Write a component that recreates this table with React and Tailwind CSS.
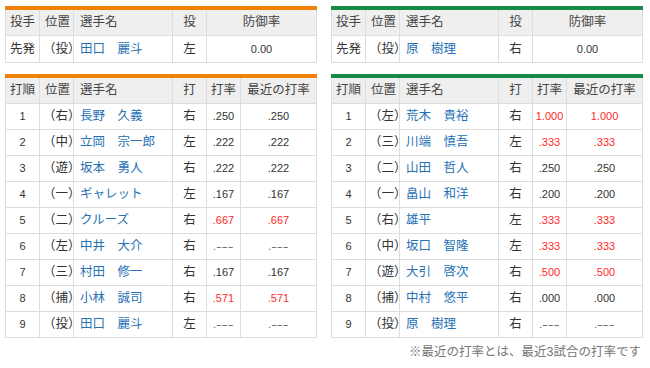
import React from "react";

const giants = {
  bar: "bg-[#f0820a]",
  pitcher: { pos: "（投）", name: "田口　麗斗", hand: "左", era: "0.00" },
  lineup: [
    ["1", "（右）", "長野　久義", "右", ".250", ".250", false],
    ["2", "（中）", "立岡　宗一郎", "左", ".222", ".222", false],
    ["3", "（遊）", "坂本　勇人", "右", ".222", ".222", false],
    ["4", "（一）", "ギャレット", "左", ".167", ".167", false],
    ["5", "（二）", "クルーズ", "右", ".667", ".667", true],
    ["6", "（左）", "中井　大介", "右", ".---", ".---", false],
    ["7", "（三）", "村田　修一", "右", ".167", ".167", false],
    ["8", "（捕）", "小林　誠司", "右", ".571", ".571", true],
    ["9", "（投）", "田口　麗斗", "左", ".---", ".---", false],
  ],
};

const swallows = {
  bar: "bg-[#178a48]",
  pitcher: { pos: "（投）", name: "原　樹理", hand: "右", era: "0.00" },
  lineup: [
    ["1", "（左）", "荒木　貴裕", "右", "1.000", "1.000", true],
    ["2", "（三）", "川端　慎吾", "左", ".333", ".333", true],
    ["3", "（二）", "山田　哲人", "右", ".250", ".250", false],
    ["4", "（一）", "畠山　和洋", "右", ".200", ".200", false],
    ["5", "（右）", "雄平", "左", ".333", ".333", true],
    ["6", "（中）", "坂口　智隆", "左", ".333", ".333", true],
    ["7", "（遊）", "大引　啓次", "右", ".500", ".500", true],
    ["8", "（捕）", "中村　悠平", "右", ".000", ".000", false],
    ["9", "（投）", "原　樹理", "右", ".---", ".---", false],
  ],
};

const th = "h-[26px] border-r border-b border-[#dddddd] bg-[#efefef] font-normal text-[#444] p-0";
const td = "h-[26px] border-r border-b border-[#dddddd] bg-white p-0";

// ".---" is drawn with longer dashes in the original
const Avg = ({ v }) =>
  v === ".---" ? (
    <span className="text-[#666]">
      .
      <span className="inline-block w-[18px] text-left">
        <span className="inline-block origin-left scale-x-[1.6]">---</span>
      </span>
    </span>
  ) : (
    v
  );

const Cols = ({ top }) => (
  <colgroup>
    <col className="w-[35px]" />
    <col className="w-[34px]" />
    <col className="w-[99px]" />
    <col className="w-[34px]" />
    {top ? (
      <col className="w-[110px]" />
    ) : (
      <>
        <col className="w-[34px]" />
        <col className="w-[76px]" />
      </>
    )}
  </colgroup>
);

const PitcherTable = ({ team }) => (
  <div className="w-[312px]">
    <div className={`h-[4px] ${team.bar}`} />
    <table className="w-[312px] table-fixed border-separate border-spacing-0">
      <Cols top />
      <thead>
        <tr>
          <th className={`${th} border-l text-center`}>投手</th>
          <th className={`${th} text-left pl-[5px]`}>位置</th>
          <th className={`${th} text-left pl-[6px]`}>選手名</th>
          <th className={`${th} text-center`}>投</th>
          <th className={`${th} text-center`}>防御率</th>
        </tr>
      </thead>
      <tbody>
        <tr>
          <td className={`${td} h-[27px] border-l text-center`}>先発</td>
          <td className={`${td} h-[27px] pl-[3px]`}>{team.pitcher.pos}</td>
          <td className={`${td} h-[27px] pl-[6px] text-[#2671b4]`}>{team.pitcher.name}</td>
          <td className={`${td} h-[27px] text-center`}>{team.pitcher.hand}</td>
          <td className={`${td} h-[27px] text-center text-[11px]`}>{team.pitcher.era}</td>
        </tr>
      </tbody>
    </table>
  </div>
);

const LineupTable = ({ team }) => (
  <div className="w-[312px]">
    <div className={`h-[4px] ${team.bar}`} />
    <table className="w-[312px] table-fixed border-separate border-spacing-0">
      <Cols />
      <thead>
        <tr>
          <th className={`${th} border-l text-center`}>打順</th>
          <th className={`${th} text-left pl-[5px]`}>位置</th>
          <th className={`${th} text-left pl-[6px]`}>選手名</th>
          <th className={`${th} text-center`}>打</th>
          <th className={`${th} text-center`}>打率</th>
          <th className={`${th} text-center`}>最近の打率</th>
        </tr>
      </thead>
      <tbody>
        {team.lineup.map(([no, pos, name, hand, avg, recent, hot]) => (
          <tr key={no}>
            <td className={`${td} border-l text-center text-[11px]`}>{no}</td>
            <td className={`${td} pl-[3px]`}>{pos}</td>
            <td className={`${td} pl-[6px] text-[#2671b4]`}>{name}</td>
            <td className={`${td} text-center`}>{hand}</td>
            <td className={`${td} text-center text-[11px] ${hot ? "text-[#ff2a2a]" : ""}`}>
              <Avg v={avg} />
            </td>
            <td className={`${td} text-center text-[11px] ${hot ? "text-[#ff2a2a]" : ""}`}>
              <Avg v={recent} />
            </td>
          </tr>
        ))}
      </tbody>
    </table>
  </div>
);

export default function App() {
  return (
    <div
      className="w-[650px] h-[368px] bg-white pl-[5px] pt-[6px] text-[12.5px] text-[#333] leading-none"
      style={{ fontFamily: '"Liberation Sans", "Noto Sans CJK JP", sans-serif' }}
    >
      <div className="flex gap-[14px]">
        <PitcherTable team={giants} />
        <PitcherTable team={swallows} />
      </div>
      <div className="flex gap-[14px] mt-[11px]">
        <LineupTable team={giants} />
        <LineupTable team={swallows} />
      </div>
      <p className="w-[636px] text-right mt-[8px] text-[#777] text-[12.5px]">
        ※最近の打率とは、最近3試合の打率です
      </p>
    </div>
  );
}
